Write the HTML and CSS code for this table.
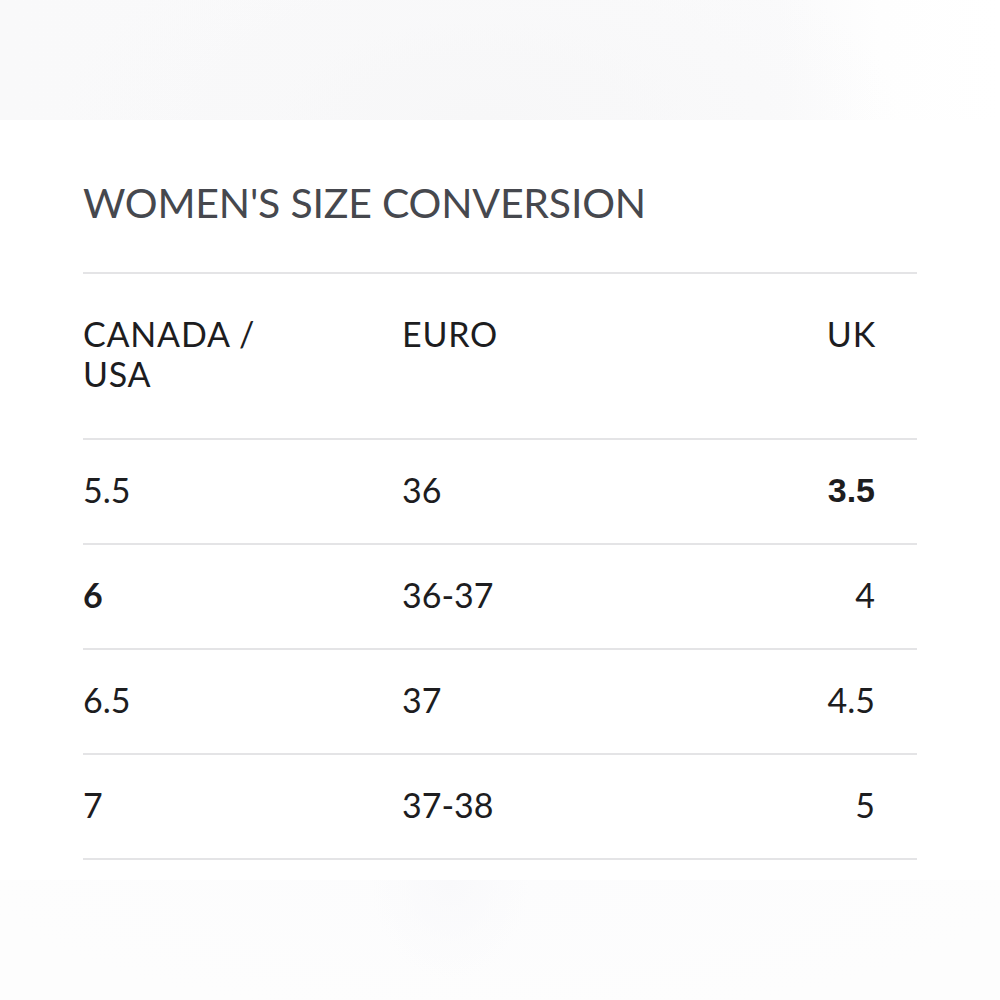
FILE: index.html
```html
<!DOCTYPE html>
<html lang="en">
<head>
<meta charset="utf-8">
<title>Women's Size Conversion</title>
<link rel="stylesheet" href="styles.css">
</head>
<body>
<div class="backdrop-top"></div>
<section class="card">
  <h1 class="title">WOMEN'S SIZE CONVERSION</h1>
  <div class="table">
    <div class="row head">
      <div class="cell">CANADA /<br>USA</div>
      <div class="cell">EURO</div>
      <div class="cell right">UK</div>
    </div>
    <div class="row">
      <div class="cell">5.5</div>
      <div class="cell">36</div>
      <div class="cell right strong alt">3.5</div>
    </div>
    <div class="row">
      <div class="cell strong">6</div>
      <div class="cell">36-37</div>
      <div class="cell right">4</div>
    </div>
    <div class="row">
      <div class="cell">6.5</div>
      <div class="cell">37</div>
      <div class="cell right">4.5</div>
    </div>
    <div class="row">
      <div class="cell">7</div>
      <div class="cell">37-38</div>
      <div class="cell right">5</div>
    </div>
  </div>
</section>
<div class="backdrop-bottom"></div>
</body>
</html>
```
FILE: styles.css
```css
html, body {
  margin: 0;
  padding: 0;
}
body {
  width: 1000px;
  height: 1000px;
  overflow: hidden;
  background: #fdfdfd;
  font-family: "Lato", "Liberation Sans", sans-serif;
}
.backdrop-top {
  height: 120px;
  background:
    radial-gradient(ellipse 420px 200px at 480px 120px, #f7f7f8 0%, rgba(247,247,248,0) 100%),
    linear-gradient(90deg, #f9f9fa 0%, #fafafb 78%, #fefefe 88%, #ffffff 100%);
}
.card {
  background: #ffffff;
  height: 760px;
  padding: 0 83px;
  box-sizing: border-box;
  overflow: hidden;
}
.title {
  margin: 0;
  padding-top: 58px;
  font-size: 41px;
  line-height: 50px;
  font-weight: 400;
  color: #46484e;
  letter-spacing: -0.2px;
}
.table {
  margin-top: 44px;
  border-top: 2px solid #e4e4e6;
}
.row {
  display: grid;
  grid-template-columns: 319px 1fr 200px;
  border-bottom: 2px solid #e4e4e6;
  padding: 30px 0 33px;
}
.row.head {
  padding: 40px 0 44px;
}
.row.head .cell {
  letter-spacing: 0.8px;
}
.cell {
  font-size: 34px;
  line-height: 40px;
  color: #1d1d1f;
}
.cell.right {
  text-align: right;
  padding-right: 42px;
}
.row.head .cell.right {
  padding-right: 41px;
}
.cell.strong {
  font-weight: 700;
}
.cell.alt {
  font-family: "Liberation Sans", Arial, sans-serif;
  font-size: 34px;
}
.backdrop-bottom {
  height: 120px;
  background:
    radial-gradient(ellipse 80px 100px at 450px 0px, #f9f9fb 0%, rgba(249,249,251,0) 100%),
    radial-gradient(ellipse 520px 140px at 500px 0px, #fcfcfd 0%, rgba(252,252,253,0) 100%),
    #fdfdfd;
}
```
